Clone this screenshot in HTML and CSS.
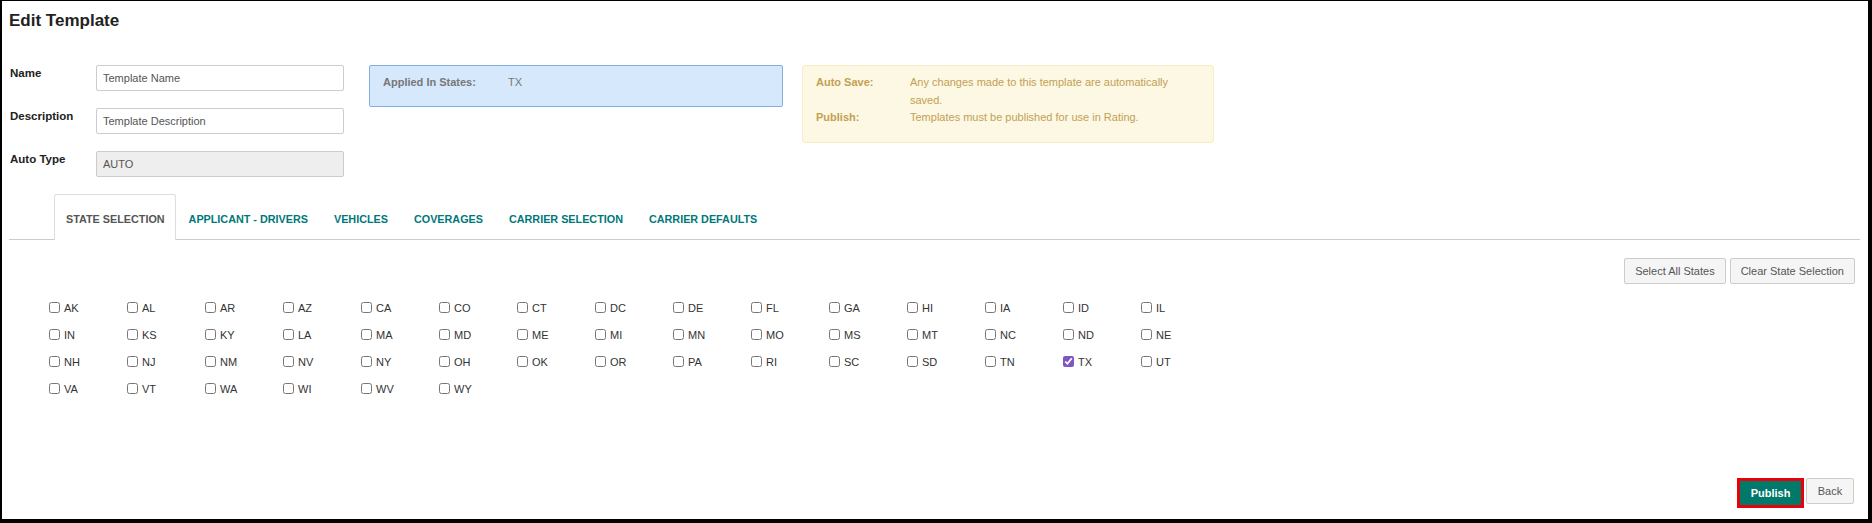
FILE: index.html
```html
<!DOCTYPE html>
<html>
<head>
<meta charset="utf-8">
<link rel="stylesheet" href="styles.css">
</head>
<body>
<div class="page">
  <h1 class="title">Edit Template</h1>
  <div class="top">
    <div class="form">
      <div class="form-row"><label class="flabel">Name</label><input class="finput" type="text" value="Template Name"></div>
      <div class="form-row"><label class="flabel">Description</label><input class="finput" type="text" value="Template Description"></div>
      <div class="form-row"><label class="flabel">Auto Type</label><input class="finput" type="text" value="AUTO" disabled></div>
    </div>
    <div class="info-box">
      <div class="info-row"><span class="info-key">Applied In States:</span><span class="info-val">TX</span></div>
    </div>
    <div class="warn-box">
      <div class="warn-row"><span class="warn-key">Auto Save:</span><span class="warn-val">Any changes made to this template are automatically saved.</span></div>
      <div class="warn-row"><span class="warn-key">Publish:</span><span class="warn-val">Templates must be published for use in Rating.</span></div>
    </div>
  </div>
  <ul class="tabs">
    <li class="tab active">STATE SELECTION</li>
    <li class="tab">APPLICANT - DRIVERS</li>
    <li class="tab">VEHICLES</li>
    <li class="tab">COVERAGES</li>
    <li class="tab">CARRIER SELECTION</li>
    <li class="tab">CARRIER DEFAULTS</li>
  </ul>
  <div class="toolbar">
    <button class="btn">Select All States</button>
    <button class="btn">Clear State Selection</button>
  </div>
  <div class="states">
    <label class="state"><input type="checkbox">AK</label>
    <label class="state"><input type="checkbox">AL</label>
    <label class="state"><input type="checkbox">AR</label>
    <label class="state"><input type="checkbox">AZ</label>
    <label class="state"><input type="checkbox">CA</label>
    <label class="state"><input type="checkbox">CO</label>
    <label class="state"><input type="checkbox">CT</label>
    <label class="state"><input type="checkbox">DC</label>
    <label class="state"><input type="checkbox">DE</label>
    <label class="state"><input type="checkbox">FL</label>
    <label class="state"><input type="checkbox">GA</label>
    <label class="state"><input type="checkbox">HI</label>
    <label class="state"><input type="checkbox">IA</label>
    <label class="state"><input type="checkbox">ID</label>
    <label class="state"><input type="checkbox">IL</label>
    <label class="state"><input type="checkbox">IN</label>
    <label class="state"><input type="checkbox">KS</label>
    <label class="state"><input type="checkbox">KY</label>
    <label class="state"><input type="checkbox">LA</label>
    <label class="state"><input type="checkbox">MA</label>
    <label class="state"><input type="checkbox">MD</label>
    <label class="state"><input type="checkbox">ME</label>
    <label class="state"><input type="checkbox">MI</label>
    <label class="state"><input type="checkbox">MN</label>
    <label class="state"><input type="checkbox">MO</label>
    <label class="state"><input type="checkbox">MS</label>
    <label class="state"><input type="checkbox">MT</label>
    <label class="state"><input type="checkbox">NC</label>
    <label class="state"><input type="checkbox">ND</label>
    <label class="state"><input type="checkbox">NE</label>
    <label class="state"><input type="checkbox">NH</label>
    <label class="state"><input type="checkbox">NJ</label>
    <label class="state"><input type="checkbox">NM</label>
    <label class="state"><input type="checkbox">NV</label>
    <label class="state"><input type="checkbox">NY</label>
    <label class="state"><input type="checkbox">OH</label>
    <label class="state"><input type="checkbox">OK</label>
    <label class="state"><input type="checkbox">OR</label>
    <label class="state"><input type="checkbox">PA</label>
    <label class="state"><input type="checkbox">RI</label>
    <label class="state"><input type="checkbox">SC</label>
    <label class="state"><input type="checkbox">SD</label>
    <label class="state"><input type="checkbox">TN</label>
    <label class="state"><input type="checkbox" checked>TX</label>
    <label class="state"><input type="checkbox">UT</label>
    <label class="state"><input type="checkbox">VA</label>
    <label class="state"><input type="checkbox">VT</label>
    <label class="state"><input type="checkbox">WA</label>
    <label class="state"><input type="checkbox">WI</label>
    <label class="state"><input type="checkbox">WV</label>
    <label class="state"><input type="checkbox">WY</label>
  </div>
  <div class="footer">
    <button class="btn-publish">Publish</button>
    <button class="btn btn-back">Back</button>
  </div>
</div>
</body>
</html>
```
FILE: styles.css
```css
html, body {
  margin: 0;
  padding: 0;
  background: #fff;
}
body {
  font-family: "Liberation Sans", Arial, sans-serif;
  font-size: 11px;
  color: #333;
}
.page {
  box-sizing: border-box;
  width: 1872px;
  height: 523px;
  border-style: solid;
  border-color: #000;
  border-width: 1px 4px 4px 2px;
  display: flex;
  flex-direction: column;
  background: #fff;
}
.title {
  margin: 10px 0 0 0;
  padding-left: 7px;
  font-size: 17px;
  line-height: 20px;
  font-weight: bold;
  color: #222;
}
.top {
  display: flex;
  align-items: flex-start;
  margin-top: 34px;
  padding-left: 8px;
}
.form {
  display: flex;
  flex-direction: column;
  gap: 17px;
}
.form-row {
  display: flex;
  align-items: flex-start;
}
.flabel {
  width: 86px;
  font-weight: bold;
  font-size: 11.5px;
  line-height: 17px;
  color: #222;
}
.finput {
  box-sizing: border-box;
  width: 248px;
  height: 26px;
  margin: 0;
  padding: 0 6px;
  border: 1px solid #ccc;
  border-radius: 2px;
  font-family: "Liberation Sans", Arial, sans-serif;
  font-size: 11px;
  color: #555;
  background: #fff;
}
.finput:disabled {
  background: #eee;
  color: #555;
}
.info-box {
  box-sizing: border-box;
  margin-left: 25px;
  width: 414px;
  height: 42px;
  padding: 8px 13px 0 13px;
  background: #d5e8fc;
  border: 1px solid #82afdc;
  border-radius: 2px;
  color: #777;
  line-height: 17.5px;
}
.info-row {
  display: flex;
}
.info-key {
  width: 125px;
  font-weight: bold;
}
.warn-box {
  box-sizing: border-box;
  margin-left: 19px;
  width: 412px;
  height: 78px;
  padding: 8px 13px 0 13px;
  background: #fcf8e3;
  border: 1px solid #f7ebc8;
  border-radius: 3px;
  color: #c39f55;
  line-height: 17.5px;
}
.warn-row {
  display: flex;
}
.warn-key {
  width: 94px;
  flex: none;
  font-weight: bold;
}
.warn-val {
  width: 270px;
}
.tabs {
  list-style: none;
  display: flex;
  margin: 17px 8px 0 7px;
  padding: 0 0 0 45px;
  border-bottom: 1px solid #ccc;
}
.tab {
  box-sizing: border-box;
  height: 45px;
  padding: 3px 12px 0 12px;
  display: flex;
  align-items: center;
  border: 1px solid transparent;
  border-bottom: none;
  font-weight: bold;
  font-size: 10.8px;
  color: #00787a;
}
.tab.active {
  color: #555;
  background: #fff;
  border-color: #ddd;
  border-radius: 3px 3px 0 0;
  margin-bottom: -1px;
  height: 46px;
  padding: 3px 10px 0 11px;
}
.toolbar {
  display: flex;
  justify-content: flex-end;
  gap: 4px;
  margin: 18px 13px 0 0;
}
.btn {
  box-sizing: border-box;
  height: 26px;
  padding: 0 10px;
  margin: 0;
  border: 1px solid #ccc;
  border-radius: 2px;
  background: #f5f5f5;
  color: #555;
  font-family: "Liberation Sans", Arial, sans-serif;
  font-size: 11px;
}
.states {
  display: grid;
  grid-template-columns: repeat(15, 78px);
  grid-auto-rows: 27px;
  margin-top: 10px;
  padding-left: 47px;
}
.state {
  display: flex;
  align-items: center;
  gap: 4px;
  color: #333;
  font-size: 11px;
}
.state input {
  width: 11px;
  height: 11px;
  margin: 0;
  accent-color: #7e57c2;
}
.footer {
  margin-top: auto;
  display: flex;
  justify-content: flex-end;
  align-items: flex-start;
  gap: 2px;
  padding: 0 14px 11px 0;
}
.btn-publish {
  box-sizing: border-box;
  width: 67px;
  height: 30px;
  margin: 0;
  padding: 0;
  border: 3px solid #e8000b;
  background: #00786a;
  color: #fff;
  font-family: "Liberation Sans", Arial, sans-serif;
  font-size: 11px;
  font-weight: bold;
}
.btn-back {
  width: 48px;
  padding: 0;
}
```
